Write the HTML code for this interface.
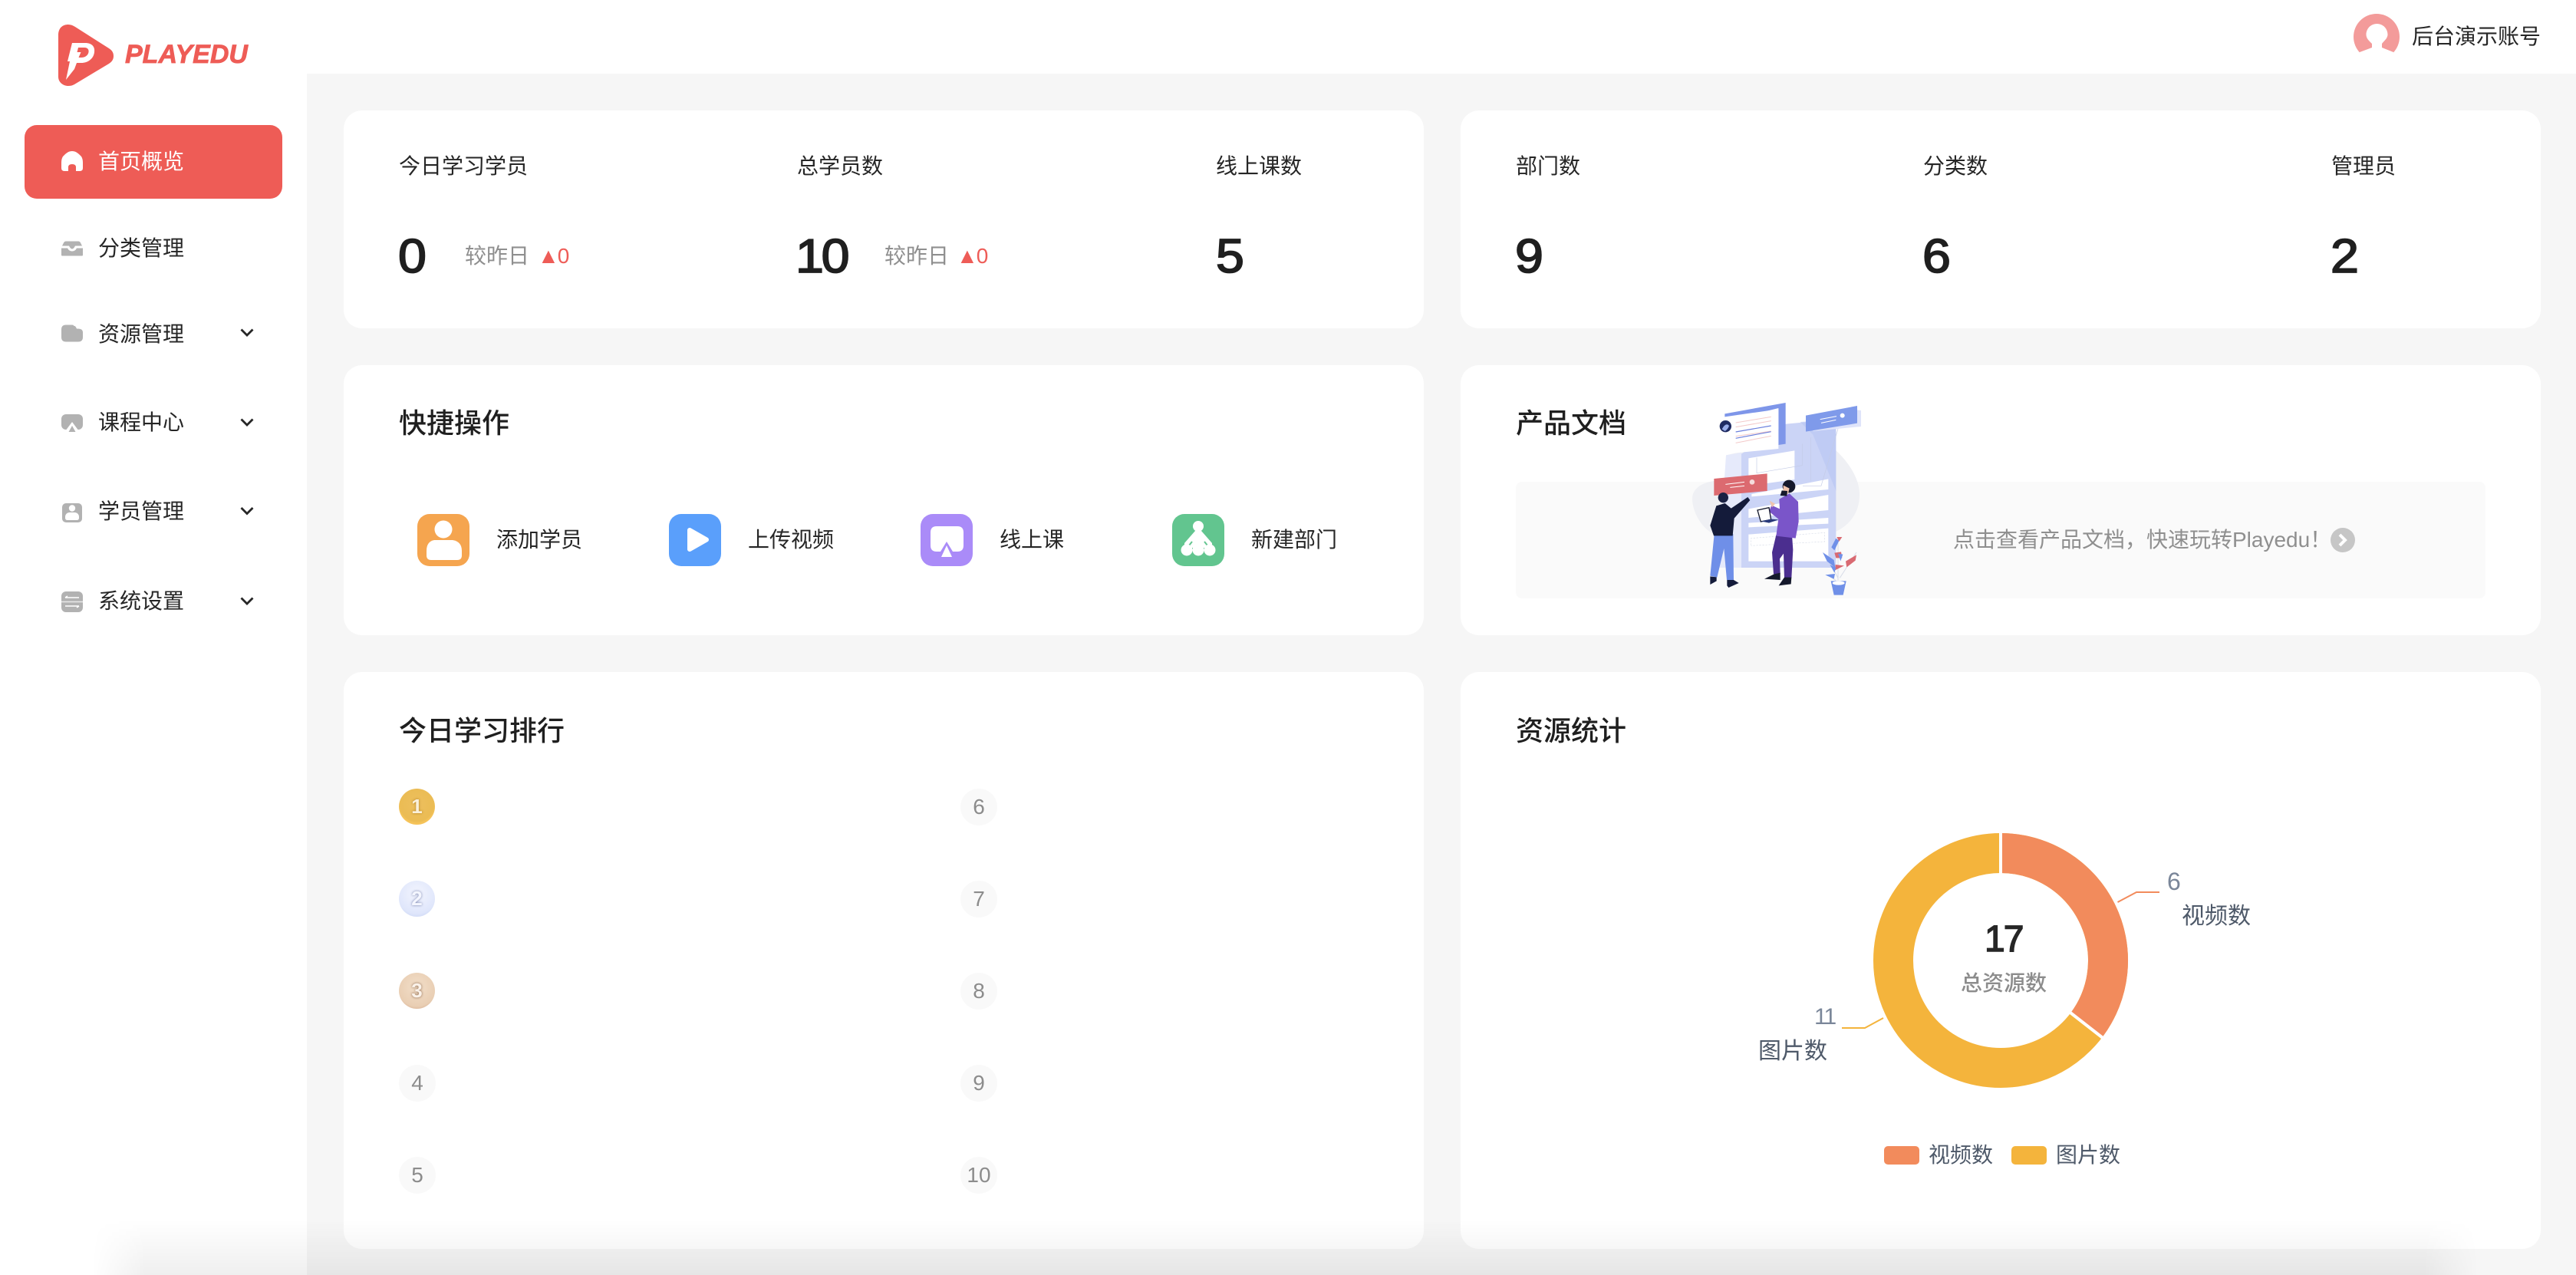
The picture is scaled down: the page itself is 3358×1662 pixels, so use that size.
<!DOCTYPE html>
<html lang="zh-CN"><head><meta charset="utf-8"><title>PlayEdu</title>
<style>
html,body{margin:0;padding:0;width:3358px;height:1662px;overflow:hidden;background:#f6f6f6}
body{position:relative;font-family:"Liberation Sans","Noto Sans CJK SC",sans-serif;color:#262626}
.a{position:absolute}
.t{position:absolute;white-space:nowrap;font-size:28px;line-height:40px;height:40px}
.card{position:absolute;background:#fff;border-radius:24px}
.h{position:absolute;white-space:nowrap;font-size:36px;line-height:50px;font-weight:500;color:#1f1f1f}
.n{position:absolute;white-space:nowrap;font-size:62px;line-height:70px;color:#1f1f1f;-webkit-text-stroke:1.800px #1f1f1f;letter-spacing:-3px;transform:scaleX(1.07);transform-origin:left center}
.g{color:#8f8f8f}
.r{color:#ee5c57;letter-spacing:-2px}
.c{position:absolute;width:48px;height:48px;border-radius:50%;background:#f9f9f9;color:#8c8c8c;font-size:28px;line-height:48px;text-align:center}
.m{position:absolute;width:47px;height:47px;border-radius:50%;font-size:26px;line-height:46px;text-align:center;font-weight:700}
.q{position:absolute;top:670px;width:68px;height:68px;border-radius:16px}
svg{position:absolute;overflow:visible;display:block}
.sh{position:absolute;left:120px;width:3110px;top:1590px;height:72px;background:linear-gradient(to bottom,rgba(0,0,0,0),rgba(0,0,0,.062));-webkit-mask-image:linear-gradient(to right,transparent 0,#000 70px,#000 3040px,transparent 3110px);mask-image:linear-gradient(to right,transparent 0,#000 70px,#000 3040px,transparent 3110px)}
</style></head><body>

<div class="a" style="left:0;top:0;width:400px;height:1662px;background:#fff"></div>
<div class="a" style="left:400px;top:0;width:2958px;height:96px;background:#fff"></div>

<svg style="left:0;top:0" width="400" height="1662" viewBox="0 0 400 1662">
  <path fill="#ee5c56" d="M76 46C76 36 82 32 89 32C92 32 95 33 98 35L142 63C146.500 66 148 69 148 73C148 77 146.500 80 142 83L97 110C94 111.500 92 112 89 112C82 112 76 107 76 100Z"/>
  <path fill="#fff" d="M94 56L111 56C120 56 124 61 123 68C122 77 114 82 106 82L100 82L97 90L86 104L91 80L88 80Z"/>
  <path fill="#ee5c56" d="M102 62L110 62C114.500 62 116 65 115.500 68C114.500 73 110 75 106 75L102.500 75L105.500 68L100.500 68Z"/>
  <rect x="32" y="163" width="336" height="96" rx="16" fill="#ee5c56"/>
  <path fill="#fff" d="M94 197C98 197 101 199 104 202L106 204Q108 207 108 212V219Q108 223 104 223H99V218Q99 214 94 214Q89 214 89 218V223H84Q80 223 80 219V212Q80 207 82 204L84 202C87 199 90 197 94 197Z"/>
  <g fill="#b2b2b2" transform="translate(0,1.500)">
    <path d="M86 313H102Q104 313 105 315L107 319H98Q96 323 94 323Q92 323 90 319H81L83 315Q84 313 86 313Z"/>
    <path d="M80 322H88Q90 326 94 326Q98 326 100 322H108V331Q108 332 107 332H81Q80 332 80 331Z"/>
  </g>
  <g transform="translate(0,5.500)">
    <path fill="#b2b2b2" d="M86 418H94Q97 418 99 421L100 423H102Q108 423 108 428V434Q108 440 102 440H86Q80 440 80 434V424Q80 418 86 418Z"/>
    <path d="M96 418.500Q105 418.500 107.500 423" fill="none" stroke="#fff" stroke-width="1.600"/>
  </g>
  <g transform="translate(0,10)">
    <rect x="80" y="530" width="28" height="20" rx="6" fill="#b2b2b2"/>
    <path fill="#fff" d="M94 540L85 552H103Z"/>
    <path fill="#b2b2b2" d="M94 545L89.500 553H98.500Z"/>
  </g>
  <g transform="translate(0,14)">
    <rect x="81" y="642" width="26" height="25" rx="5" fill="#b2b2b2"/>
    <circle cx="94" cy="648.500" r="4.200" fill="#fff"/>
    <path fill="#fff" d="M90 654H98Q103 655 103 660V661Q103 664 100 664H88Q85 664 85 661V660Q85 655 90 654Z"/>
  </g>
  <g transform="translate(0,18)">
    <rect x="80" y="753" width="28" height="27" rx="6" fill="#b2b2b2"/>
    <path d="M80 766.500H108" stroke="#e8e8e8" stroke-width="1.500"/>
    <path d="M85 761H103M85 772H103M88 759L85 761M100 774L103 772" stroke="#fff" stroke-width="1.500" fill="none"/>
  </g>
  <path d="M314.500 429.500L322 437L329.500 429.500M314.500 546.500L322 554L329.500 546.500M314.500 662L322 669.500L329.500 662M314.500 779.500L322 787L329.500 779.500" fill="none" stroke="#262626" stroke-width="2.800"/>
</svg>
<div class="a" style="left:163px;top:51px;font-size:34px;line-height:40px;font-weight:700;font-style:italic;color:#ee5c56;-webkit-text-stroke:.8px #ee5c56;white-space:nowrap">PLAYEDU</div>

<div class="t" style="left:128px;top:191px;color:#fff">首页概览</div>
<div class="t" style="left:128px;top:304px">分类管理</div>
<div class="t" style="left:128px;top:416px">资源管理</div>
<div class="t" style="left:128px;top:531px">课程中心</div>
<div class="t" style="left:128px;top:647px">学员管理</div>
<div class="t" style="left:128px;top:764px">系统设置</div>

<svg style="left:3000px;top:0" width="200" height="96" viewBox="3000 0 200 96">
  <circle cx="3098" cy="48" r="30" fill="#f39b9a"/>
  <path fill="#fff" d="M3098.500 31C3107 31 3112.500 38 3112.500 45C3112.500 50 3108 53 3105 57L3105 62L3120 68L3120 80H3076V68L3092 62L3092 57C3088 53 3084.500 50 3084.500 45C3084.500 38 3090 31 3098.500 31Z"/>
</svg>
<div class="t" style="left:3144px;top:28px">后台演示账号</div>

<!-- row 1 -->
<div class="card" style="left:448px;top:144px;width:1408px;height:284px"></div>
<div class="card" style="left:1904px;top:144px;width:1408px;height:284px"></div>
<div class="t" style="left:520px;top:197px">今日学习学员</div>
<div class="t" style="left:1039px;top:197px">总学员数</div>
<div class="t" style="left:1585px;top:197px">线上课数</div>
<div class="n" style="left:519px;top:300px">0</div>
<div class="t g" style="left:606px;top:314px">较昨日</div>
<div class="t r" style="left:701px;top:314px">▲0</div>
<div class="n" style="left:1037px;top:300px">10</div>
<div class="t g" style="left:1153px;top:314px">较昨日</div>
<div class="t r" style="left:1247px;top:314px">▲0</div>
<div class="n" style="left:1585px;top:300px">5</div>
<div class="t" style="left:1976px;top:197px">部门数</div>
<div class="t" style="left:2507px;top:197px">分类数</div>
<div class="t" style="left:3039px;top:197px">管理员</div>
<div class="n" style="left:1975px;top:300px">9</div>
<div class="n" style="left:2506px;top:300px">6</div>
<div class="n" style="left:3038px;top:300px">2</div>

<!-- row 2 -->
<div class="card" style="left:448px;top:476px;width:1408px;height:352px"></div>
<div class="card" style="left:1904px;top:476px;width:1408px;height:352px"></div>
<div class="h" style="left:520px;top:527px">快捷操作</div>
<div class="h" style="left:1976px;top:527px">产品文档</div>

<div class="q" style="left:544px;background:#f5a54f"></div>
<div class="q" style="left:872px;background:#5a9ffb"></div>
<div class="q" style="left:1200px;background:#aa8bf8"></div>
<div class="q" style="left:1528px;background:#62c58f"></div>
<svg style="left:540px;top:660px" width="1070" height="90" viewBox="540 660 1070 90">
  <ellipse cx="578" cy="690" rx="11.500" ry="11.500" fill="#fff"/>
  <path fill="#fff" d="M566 704H590Q602 706 602 718V724Q602 730 596 730H562Q556 730 556 724V718Q556 706 566 704Z"/>
  <path fill="#fff" stroke="#fff" stroke-width="6" stroke-linejoin="round" d="M899 691L921 703.500L899 716Z"/>
  <path fill="#fff" d="M1213 694Q1213 686 1221 686H1248Q1256 686 1256 694V711Q1256 719 1248 719H1242L1234 706L1226 719H1221Q1213 719 1213 711Z"/>
  <path fill="#fff" d="M1234 711L1241 726H1227Z"/>
  <circle cx="1562" cy="686" r="7" fill="#fff"/>
  <path fill="#fff" d="M1558 692H1566L1580 708V716H1544V708Z"/>
  <path d="M1554 706L1550 711M1570 706L1574 711M1555 714V722M1569.500 714V722" stroke="#62c58f" stroke-width="2" fill="none"/>
  <circle cx="1547" cy="717" r="7.500" fill="#fff"/><circle cx="1562" cy="717" r="7.500" fill="#fff"/><circle cx="1577" cy="717" r="7.500" fill="#fff"/>
</svg>
<div class="t" style="left:647px;top:684px">添加学员</div>
<div class="t" style="left:975px;top:684px">上传视频</div>
<div class="t" style="left:1303px;top:684px">线上课</div>
<div class="t" style="left:1631px;top:684px">新建部门</div>

<!-- docs banner -->
<div class="a" style="left:1976px;top:628px;width:1264px;height:152px;background:#fafafa;border-radius:8px"></div>
<svg style="left:2150px;top:500px" width="400" height="300" viewBox="0 0 1200 900">
  <path fill="#eff0f4" d="M168 450C168 395 240 375 300 380L300 280L650 200C760 270 825 360 822 440C820 530 750 590 650 600L300 600C220 600 168 510 168 450Z"/>
  <path fill="#e6eafb" d="M300 280L360 270V720H270Z"/>
  <path fill="#cbd4f6" d="M360 275L535 158L730 140V720H360Z"/>
  <path fill="#b8c4f3" d="M590 150L730 140V420L640 200Z" opacity=".6"/>
  <path fill="#fff" d="M388 292L568 262V375L388 400Z"/>
  <path fill="#fff" d="M400 432L700 373V414L400 442Z"/>
  <path fill="#fff" d="M388 490L700 435V495L388 525Z"/>
  <path fill="#fff" d="M388 545L700 525V548L388 562Z"/>
  <path fill="#fff" d="M388 590L700 566V695H388Z"/>
  <path d="M398 632V605L686 583V618L398 634" fill="none" stroke="#d9dee9" stroke-width="2" stroke-dasharray="7 5"/>
  <path d="M420 290V350L598 320V235M600 400L672 400L740 170M632 210V380" fill="none" stroke="#c3cbe6" stroke-width="2"/>
  <path fill="#7e96e9" d="M295 118L533 75V236L505 240V100L295 130Z"/>
  <path fill="#fff" d="M268 155L505 96V255L268 278Z"/>
  <path d="M338 153L476 130M338 170L476 146M338 206L476 186" stroke="#f3c9c9" stroke-width="3"/>
  <path d="M338 189L476 165M338 214L476 188" stroke="#6b7fdc" stroke-width="3.500"/>
  <path d="M338 232L476 205" stroke="#f3c9c9" stroke-width="3"/>
  <circle cx="298" cy="167" r="23" fill="#1f2b62"/><path d="M284 178Q300 150 312 165Q308 178 296 186Z" fill="#9aaeea"/>
  <path fill="#dfe4fa" d="M813 103L828 105V168L640 186V172Z"/>
  <path fill="#7f9aea" d="M612 125L813 87V155L612 188Z"/>
  <path d="M668 140L732 128M672 154L730 142" stroke="#fff" stroke-width="3"/><circle cx="755" cy="125" r="9" fill="#fff"/>
  <path fill="#dc6a70" d="M253 372L461 352V420L253 438Z"/>
  <path d="M298 394L372 385M316 406L372 400" stroke="#fff" stroke-width="3"/><circle cx="402" cy="385" r="10" fill="#f5dcdc"/>
  <path fill="#6f8fe8" d="M254 588H328L330 768H303L292 645L265 758L238 752Z"/>
  <path fill="#141b3a" d="M262 478L296 468L320 488L385 444L394 456L332 527L326 595H252L238 555Z"/>
  <circle cx="289" cy="446" r="20" fill="#1b2244"/>
  <path fill="#141b3a" d="M238 754L263 757V772L238 786ZM304 768H330L350 780L310 798L304 790Z"/>
  <path fill="#4b2e8f" d="M496 592H558L562 650L556 760H528L525 665L510 685L512 745H486L480 660Z"/>
  <path fill="#7a55c9" d="M508 452L548 430L582 462L584 540L572 605L496 596L505 530L468 500L478 476L510 490Z"/>
  <circle cx="546" cy="402" r="25" fill="#15192c"/>
  <path fill="#f0c4ae" d="M524 398L548 410L542 432L524 432Z"/>
  <path fill="#15192c" d="M518 418L540 420L538 440L512 438Z"/>
  <path fill="#15192c" d="M488 745L512 740V768L450 764ZM528 758L556 758L554 784L506 790Z"/>
  <path fill="#fff" stroke="#15192c" stroke-width="4" d="M423 495L468 485L476 532L436 540Z"/>
  <path fill="#2a3a7a" d="M436 538L476 530L506 532L468 545Z"/>
  <path fill="#f0c4ae" d="M470 458L492 470L480 484Z"/>
  <path fill="#7090e8" d="M710 772H770L758 827H722Z"/><ellipse cx="740" cy="780" rx="24" ry="8" fill="#fff"/>
  <path d="M738 770V610M738 760L700 690M745 760L810 660M730 770L700 750" stroke="#d8dce8" stroke-width="3" fill="none"/>
  <path fill="#d96a72" d="M733 600L754 600L742 618Z"/>
  <path fill="#7090e8" d="M730 605L742 615L724 652L712 640Z"/>
  <path fill="#7090e8" d="M678 660L722 690L727 720L695 695Z"/>
  <path fill="#d96a72" d="M724 662L750 658L754 682L730 682Z"/>
  <path fill="#7090e8" d="M738 665L757 668L748 694Z"/>
  <path fill="#d96a72" d="M728 708L762 712L726 730Z"/>
  <path fill="#7090e8" d="M706 708L730 720L724 740Z"/>
  <path fill="#d96a72" d="M768 695L810 670L806 692L772 718Z"/>
  <path fill="#7090e8" d="M688 748L726 744L722 764Z"/>
</svg>
<div class="t" style="left:2546px;top:684px;color:#8f8f8f">点击查看产品文档，快速玩转Playedu！</div>
<svg style="left:3036px;top:686px" width="36" height="36" viewBox="0 0 36 36">
  <circle cx="18" cy="18" r="16" fill="#c6c6c6"/>
  <path d="M14 11L21 18L14 25" fill="none" stroke="#fff" stroke-width="4"/>
</svg>

<!-- row 3 -->
<div class="card" style="left:448px;top:876px;width:1408px;height:752px"></div>
<div class="card" style="left:1904px;top:876px;width:1408px;height:752px"></div>
<div class="h" style="left:520px;top:928px">今日学习排行</div>
<div class="h" style="left:1976px;top:928px">资源统计</div>

<div class="m" style="left:520px;top:1028px;color:#faf0da;text-shadow:0 0 3px #b07c20;background:radial-gradient(circle at 50% 44%,#ecbf5e 0,#ebbc54 62%,#f6c45a 70%,#f3b53c 100%)">1</div>
<div class="m" style="left:520px;top:1148px;color:#f4f6fe;text-shadow:0 0 3px #6f7aa8;background:radial-gradient(circle at 50% 36%,#f3f5fe 0,#dfe6fb 68%,#d3dcf7 80%,#cfd9f6 100%)">2</div>
<div class="m" style="left:520px;top:1268px;color:#faf2ea;text-shadow:0 0 3px #845e40;background:radial-gradient(circle at 50% 40%,#f2dfca 0,#e9ceb3 68%,#ddba9e 80%,#d9b599 100%)">3</div>
<div class="c" style="left:520px;top:1388px">4</div>
<div class="c" style="left:520px;top:1508px">5</div>
<div class="c" style="left:1252px;top:1028px">6</div>
<div class="c" style="left:1252px;top:1148px">7</div>
<div class="c" style="left:1252px;top:1268px">8</div>
<div class="c" style="left:1252px;top:1388px">9</div>
<div class="c" style="left:1252px;top:1508px">10</div>

<!-- donut -->
<svg style="left:2280px;top:1100px" width="700" height="300" viewBox="2280 1100 700 300">
  <circle cx="2608" cy="1252" r="140" fill="none" stroke="#f4b43c" stroke-width="52"/>
  <path d="M2608 1112A140 140 0 0 1 2719.800 1336.300" fill="none" stroke="#f28b5c" stroke-width="52"/>
  <path d="M2608 1082V1142M2695 1317L2745 1356" stroke="#fff" stroke-width="4"/>
  <path d="M2760.500 1176L2785 1163H2815" fill="none" stroke="#f28b5c" stroke-width="2"/>
  <path d="M2455 1327L2431 1340H2401" fill="none" stroke="#f4b43c" stroke-width="2"/>
</svg>
<div class="a" style="left:2587px;top:1195px;font-size:48px;line-height:60px;color:#262626;-webkit-text-stroke:1.500px #262626;letter-spacing:-2px;white-space:nowrap">17</div>
<div class="t" style="left:2556px;top:1262px;color:#8c8c8c;font-weight:500">总资源数</div>
<div class="t" style="left:2825px;top:1129px;color:#7a8699;font-size:32px">6</div>
<div class="t" style="left:2844px;top:1175px;color:#4e5969;font-size:30px">视频数</div>
<div class="t" style="left:2365px;top:1306px;color:#7a8699;font-size:30px;letter-spacing:-2px">11</div>
<div class="t" style="left:2292px;top:1351px;color:#4e5969;font-size:30px">图片数</div>
<div class="a" style="left:2456px;top:1494px;width:46px;height:24px;border-radius:5px;background:#f28b5c"></div>
<div class="t" style="left:2514px;top:1486px;color:#4e5969">视频数</div>
<div class="a" style="left:2622px;top:1494px;width:46px;height:24px;border-radius:5px;background:#f4b43c"></div>
<div class="t" style="left:2680px;top:1486px;color:#4e5969">图片数</div>

<div class="sh"></div>
</body></html>
